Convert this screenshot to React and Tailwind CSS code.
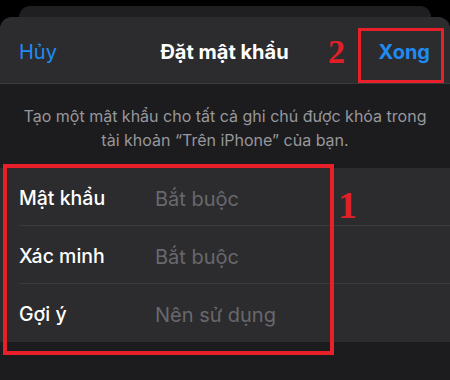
import React from 'react'

const rows = [
  { label: 'Mật khẩu', placeholder: 'Bắt buộc' },
  { label: 'Xác minh', placeholder: 'Bắt buộc' },
  { label: 'Gợi ý', placeholder: 'Nên sử dụng' },
]

const App = () => {
  return (
    <div
      className="relative w-[450px] h-[380px] overflow-hidden bg-black flex flex-col pt-[6px]"
      style={{ fontFamily: 'Inter, "Noto Sans", sans-serif' }}
    >
      {/* stacked sheet behind */}
      <div className="mx-[19px] h-[11px] rounded-t-[12px] bg-[#1f1f21]" />

      {/* main sheet */}
      <div className="flex-1 flex flex-col rounded-t-[12px] bg-[#1c1c1e] overflow-hidden">
        <div className="h-[67px] flex items-center justify-between pl-[19px] pr-[20px] pt-[3px] bg-[#2c2c2e] border-b border-[#3a3a3c]">
          <span className="text-[20px] text-[#1f8bf2] w-[90px]">Hủy</span>
          <span className="text-[20px] font-bold text-white">Đặt mật khẩu</span>
          <span className="text-[20px] font-bold text-[#1f8bf2] w-[90px] text-right">Xong</span>
        </div>

        <p className="pt-[20px] px-[10px] text-center text-[16px] leading-[24px] text-[#97979c]">
          Tạo một mật khẩu cho tất cả ghi chú được khóa trong
          <br />
          tài khoản “Trên iPhone” của bạn.
        </p>

        <div className="mt-[16px] bg-[#2c2c2e]">
          {rows.map((row, i) => (
            <div key={row.label} className="pl-[19px]">
              <div
                className={
                  'flex items-center h-[58px] pt-[4px] ' +
                  (i < rows.length - 1 ? 'border-b border-[#3a3a3c]' : '')
                }
              >
                <span className="w-[136px] text-[19.5px] font-medium text-white">{row.label}</span>
                <span className="text-[20px] text-[#68686d]">{row.placeholder}</span>
              </div>
            </div>
          ))}
        </div>
      </div>

      {/* red annotations */}
      <div className="absolute left-[358px] top-[28px] w-[86px] h-[55px] border-[3px] border-[#e8202a]" />
      <span
        className="absolute left-[328px] top-[35px] text-[34px] font-bold leading-none text-[#e02028]"
        style={{ fontFamily: '"Liberation Serif", serif' }}
      >
        2
      </span>
      <div className="absolute left-[3px] top-[164px] w-[331px] h-[191px] border-[4px] border-[#e8202a]" />
      <span
        className="absolute left-[338px] top-[186px] text-[38px] font-bold leading-none text-[#e02028]"
        style={{ fontFamily: '"Liberation Serif", serif' }}
      >
        1
      </span>
    </div>
  )
}

export default App
